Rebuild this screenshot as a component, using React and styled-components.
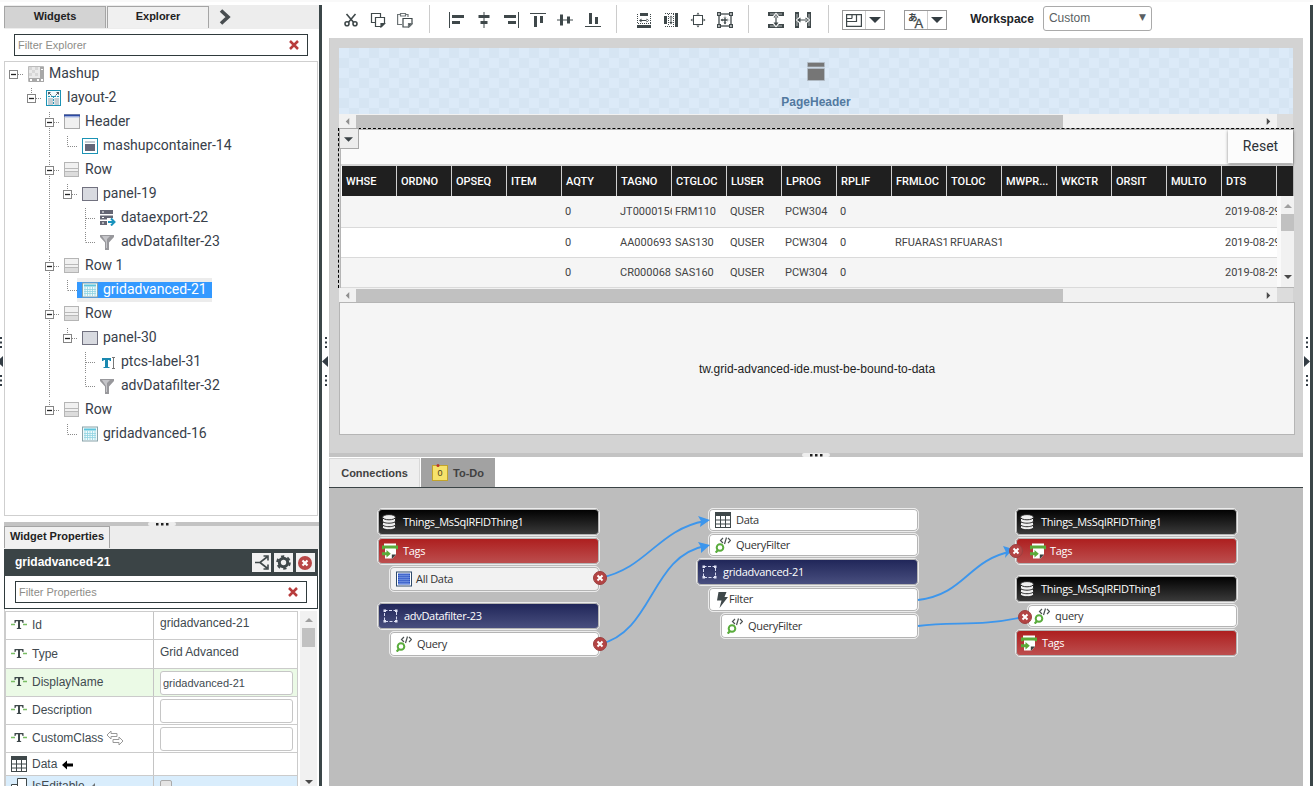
import styled, { createGlobalStyle, css } from "styled-components";

const GlobalStyle = createGlobalStyle`
  * {
    box-sizing: border-box;
  }

  body {
    margin: 0;
    background: #fff;
    color: #333;
    font-family: "Liberation Sans", Arial, sans-serif;
    font-size: 12px;
    overflow: hidden;
  }
`

/* ---------- shell ---------- */

const Shell = styled.div`
  display: flex;
  width: 1313px;
  height: 786px;
  overflow: hidden;
  background: linear-gradient(#f9f9f9 2px, #fff 2px);
`
const Edge = styled.div`
  flex: none;
  width: 3px;
  margin-top: 5px;
  background: #3b4648;
`
const Handle = styled.div`
  flex: none;
  width: ${({ $width }) => $width}px;
  padding-top: 337px;
  overflow: hidden;

  svg {
    display: block;
    margin-left: ${({ $shift }) => $shift || 0}px;
  }
`
const Sidebar = styled.aside`
  display: flex;
  flex-direction: column;
  flex: none;
  width: 315px;
  padding-top: 5px;
`
const Main = styled.main`
  display: flex;
  flex-direction: column;
  flex: none;
  width: 974px;
`

/* ---------- sidebar ---------- */

const TabStrip = styled.div`
  display: flex;
  flex: none;
  gap: 1px;
  height: ${({ $height }) => $height}px;
  padding-top: ${({ $top }) => $top || 0}px;
  background: #ededed;
`
const SideTab = styled.div`
  width: ${({ $width }) => $width}px;
  height: 22px;
  border: 1px solid #a5a5a5;
  border-bottom: none;
  background: ${({ $active }) => ($active ? "#f0f0f0" : "#d3d3d3")};
  color: #222;
  font-size: 11px;
  font-weight: bold;
  line-height: 19px;
  text-align: center;
`
const Chevron = styled.svg`
  margin: 3px 0 0 9px;
`
const FilterBox = styled.div`
  display: flex;
  flex: none;
  align-items: center;
  justify-content: space-between;
  width: ${({ $width }) => $width}px;
  height: 22px;
  margin: ${({ $margin }) => $margin};
  padding: 0 8px 0 3px;
  border: 1px solid #2f3a3c;
  background: #fff;
  color: #8d8d88;
  font-size: 11px;
`
const Tree = styled.div`
  flex: none;
  width: 314px;
  height: 455px;
  border: 1px solid #cfcfcf;
  background: #fff;
`
const TreeRow = styled.div`
  display: flex;
  height: 24px;
`
const TreeItem = styled.div`
  display: flex;
  align-items: center;
  height: 24px;
  padding: 0 5px;
  gap: 5px;
  color: #38404a;
  font-family: Roboto, sans-serif;
  font-size: 14px;
  line-height: 16px;
  white-space: nowrap;

  svg {
    flex: none;
  }

  span {
    margin-top: -2px;
  }

  ${({ $selected }) => $selected && css`
    background: linear-gradient(#ececec 4px, #3399ff 4px, #3399ff 20px, #ececec 20px);
    color: #fff;
  `}
`
const SplitBar = styled.div`
  display: flex;
  flex: none;
  align-items: flex-start;
  justify-content: center;
  height: ${({ $height }) => $height}px;
  margin-top: ${({ $top }) => $top || 0}px;
  background: #c3c3c3;

  span {
    width: 28px;
    height: ${({ $height }) => $height}px;
    border-radius: 2px;
    background: #eee;
  }

  svg {
    display: block;
    margin: 1px auto 0;
  }
`
const WidgetHeader = styled.div`
  display: flex;
  flex: none;
  align-items: center;
  width: 314px;
  height: 27px;
  padding: 0 3px 0 11px;
  gap: 3px;
  background: #3b4446;
  color: #fff;
  font-weight: bold;

  b {
    flex: 1;
    margin-top: -2px;
  }
`
const HeaderButton = styled.div`
  width: 19px;
  height: 19px;
  background: #f1f1f1;

  svg {
    display: block;
  }
`
const FilterArea = styled.div`
  flex: none;
  width: 314px;
  height: 33px;
  padding: 5px 0 0 10px;
  border: 1px solid #2f3a3c;
  border-top: none;
`
const PropArea = styled.div`
  display: flex;
  flex: 1;
  width: 314px;
  padding: 2px 0 0;
  border-left: 1px solid #ccc;
  overflow: hidden;
`
const PropTable = styled.div`
  width: 293px;
  border-left: 1px solid #ccc;
  border-top: 1px solid #ccc;
`
const PropRow = styled.div`
  display: grid;
  grid-template-columns: 148px 144px;
  height: ${({ $height }) => $height}px;
  border-bottom: 1px solid #cbcbcb;
  background: ${({ $bg }) => $bg || "#fff"};
  color: #414a50;
`
const PropName = styled.div`
  display: flex;
  align-items: flex-start;
  padding: ${({ $top }) => $top || 4}px 0 0 5px;
  gap: 5px;
  border-right: 1px solid #c4c4c4;
  line-height: 16px;

  svg {
    flex: none;
  }

  svg + span + svg {
    margin-left: ${({ $near }) => $near || 0}px;
  }
`
const PropValue = styled.div`
  padding: ${({ $top }) => $top || 3}px 0 0 6px;
  border-right: 1px solid #cbcbcb;
  line-height: 16px;
`
const PropInput = styled.div`
  width: 133px;
  height: 24px;
  margin-top: -1px;
  padding-left: 2px;
  border: 1px solid #c6c6c6;
  border-radius: 3px;
  background: #fff;
  font-size: 11px;
  line-height: 23px;
`
const Checkbox = styled.div`
  width: 12px;
  height: 12px;
  margin-top: 1px;
  border: 1px solid #aaa;
  border-radius: 2px;
  background: #e4e4e4;
`
const VScroll = styled.div`
  display: flex;
  flex-direction: column;
  align-items: center;
  justify-content: space-between;
  width: ${({ $width }) => $width}px;
  margin-left: ${({ $left }) => $left}px;
  padding: ${({ $pad }) => $pad};
  background: #f1f1f1;
`
const VThumb = styled.i`
  width: 13px;
  height: ${({ $height }) => $height}px;
  margin: 4px 0 auto;
  background: #c1c1c1;
`

/* ---------- toolbar ---------- */

const Toolbar = styled.div`
  display: flex;
  flex: none;
  height: 38px;
  padding: 5px 0 0 8px;
`
const ToolGroup = styled.div`
  display: grid;
  grid-auto-flow: column;
  grid-auto-columns: ${({ $pitch }) => $pitch || 27}px;
  place-items: center;
  height: 30px;
  margin-right: ${({ $after }) => $after}px;
`
const Separator = styled.i`
  width: 1px;
  height: 28px;
  margin-right: 13px;
  background: #ccc;
`
const DropButton = styled.div`
  display: flex;
  align-items: center;
  width: 43px;
  height: 20px;
  margin: 5px 19px 0 0;
  border: 1px solid #999;

  svg {
    margin-left: 3px;
  }

  i {
    width: 1px;
    height: 18px;
    margin-left: 3px;
    background: #ccc;
  }
`
const ToolLabel = styled.b`
  margin: 7px 9px 0 4px;
  color: #1c2428;
  line-height: 14px;
`
const Select = styled.div`
  display: flex;
  justify-content: space-between;
  align-items: center;
  width: 109px;
  height: 25px;
  margin-top: 1px;
  padding: 0 5px;
  border: 1px solid #aaa;
  border-radius: 3px;
  color: #5a5f62;

  span {
    margin-top: -1px;
  }

  small {
    margin-top: -3px;
    font-family: "DejaVu Sans", sans-serif;
    font-size: 9px;
  }
`

/* ---------- canvas ---------- */

const Canvas = styled.section`
  display: flex;
  flex-direction: column;
  flex: none;
  height: 415px;
  padding: 10px 0 0 9px;
  border-left: 1px solid #ccc;
  background: #d3d3d3;
`
const PageHeader = styled.div`
  display: flex;
  flex-direction: column;
  align-items: center;
  width: 954px;
  height: 66px;
  padding-top: 14px;
  gap: 14px;
  background: repeating-conic-gradient(#d6e5f3 0 25%, #dceaf8 0 50%) 0 0 / 20px 20px;
  color: #5279a0;
  font-weight: bold;
  line-height: 14px;
`
const HScroll = styled.div`
  display: flex;
  align-items: center;
  width: 954px;
  height: 14px;
  background: linear-gradient(90deg, #f1f1f1 938px, #dcdcdc 938px);

  svg {
    margin: 0 5px;
  }

  i {
    width: 707px;
    height: 13px;
    margin-right: 197px;
    background: #c1c1c1;
  }
`
const GridFrame = styled.div`
  position: relative;
  width: 956px;
  height: 160px;
  margin-left: -1px;
  padding-left: 1px;
  border-top: 1px dashed #000;
  border-left: 1px dashed #000;
`
const GridMenu = styled.div`
  position: absolute;
  left: 0;
  top: -1px;
  width: 20px;
  height: 21px;
  padding: 6px 4px;
  border: 1px solid #a8a8a8;
  background: #ededed;

  svg {
    display: block;
  }
`
const GridPanel = styled.div`
  height: 159px;
  border: 1px solid #b5b5b5;
  background: #fafafa;
`
const GridBar = styled.div`
  display: flex;
  justify-content: flex-end;
  height: 36px;
  border-bottom: 2px solid #d5d5d5;
`
const ResetButton = styled.div`
  width: 65px;
  height: 33px;
  background: #fcfcfc;
  box-shadow: 0 1px 3px rgba(0, 0, 0, 0.45);
  color: #2d3238;
  font-family: Roboto, sans-serif;
  font-size: 14px;
  line-height: 32px;
  text-align: center;
`
const GridHead = styled.div`
  display: flex;
  height: 30px;
  margin-left: 1px;
  background: #1f1f1f;
`
const HeadCell = styled.div`
  flex: none;
  width: 55px;
  padding-left: 4px;
  border-right: 1px solid #d0d0d0;
  color: #fff;
  font-family: Roboto, sans-serif;
  font-size: 11px;
  font-weight: 500;
  line-height: 31px;
  overflow: hidden;
`
const GridBody = styled.div`
  display: flex;
  height: 91px;
`
const GridRow = styled.div`
  display: flex;
  width: 936px;
  height: ${({ $height }) => $height}px;
  padding-left: 1px;
  border-bottom: 1px solid #dadada;
  background: ${({ $odd }) => ($odd ? "#f5f5f5" : "#fff")};
  line-height: ${({ $height }) => $height}px;
`
const Cell = styled.div`
  flex: none;
  width: 55px;
  padding-left: 3px;
  color: #434343;
  font-family: Roboto, sans-serif;
  font-size: 11px;
  white-space: nowrap;
  overflow: hidden;
`
const EmptyGrid = styled.div`
  width: 956px;
  height: 133px;
  border: 1px solid #b5b5b5;
  background: #f5f5f5;
  color: #222;
  line-height: 132px;
  text-align: center;
`

/* ---------- connections ---------- */

const LowerTabs = styled.div`
  display: flex;
  flex: none;
  height: 31px;
  padding-top: 1px;
  gap: 1px;
  border-bottom: 1px solid #3b4446;
`
const LowerTab = styled.div`
  display: flex;
  align-items: center;
  justify-content: center;
  width: ${({ $width }) => $width}px;
  gap: 5px;
  border: 1px solid ${({ $active }) => ($active ? "#d8d8d8" : "#a2a2a2")};
  border-bottom: none;
  background: ${({ $active }) => ($active ? "#eee" : "#a2a2a2")};
  color: #414141;
  font-size: 11px;
  font-weight: bold;

  svg {
    margin-top: -2px;
  }
`
const Diagram = styled.div`
  position: relative;
  flex: 1;
  background: #bdbdbd;
  overflow: hidden;
`
const Links = styled.svg`
  position: absolute;
  left: 0;
  top: 0;
`
const nodeFill = {
  thing: "linear-gradient(#000, #3c3c3c)",
  service: "linear-gradient(#ad1d1d, #bd5050)",
  widget: "linear-gradient(#1f2558, #4a5080)",
  pale: "#f2f2f2",
  plain: "#fff",
}
const Node = styled.div`
  position: absolute;
  left: ${({ $x }) => $x}px;
  top: ${({ $y }) => $y}px;
  display: flex;
  align-items: center;
  width: ${({ $w }) => $w}px;
  height: ${({ $h }) => $h}px;
  padding-left: ${({ $pad }) => $pad}px;
  gap: ${({ $gap }) => $gap}px;
  border: 1px solid #ececec;
  border-radius: 5px;
  background: ${({ $kind }) => nodeFill[$kind]};
  box-shadow: inset 0 0 0 1px #b4b4b4;
  color: ${({ $kind }) => ($kind === "plain" || $kind === "pale" ? "#333" : "#fff")};
  font-family: "Open Sans", "Noto Sans", sans-serif;
  font-size: 11px;
  letter-spacing: -0.3px;
  white-space: nowrap;

  span {
    margin-top: -2px;
  }
`

/* ---------- drawings ---------- */

const ink = "#3f484a";

const Dots = () => (
  <svg width="14" height="3" viewBox="0 0 14 3" fill="#222">
    <path d="M1 0h2.500v2.500H1zM6 0h2.500v2.500H6zM11 0h2.500v2.500H11z" />
  </svg>
)

const HandleArt = ({ right }) => (
  <svg width="7" height="50" viewBox="0 0 7 50" fill="#333c44">
    <path d="M3 0h2v2H3zM3 4.500h2v2H3zM3 9h2v2H3zM3 38h2v2H3zM3 42.500h2v2H3zM3 47h2v2H3z" />
    {right ? <path d="M1 19l6 5.500-6 5.500z" /> : <path d="M6 19l-6 5.500 6 5.500z" />}
  </svg>
)

const Arrow = styled.svg`
  flex: none;
`

const Tri = ({ dir, color = "#4a4a4a", w = 8 }) => {
  const shapes = {
    up: "M0 6L4 2l4 4z",
    down: "M0 2h8L4 6z",
    left: "M6 0v8L2 4z",
    right: "M2 0v8l4-4z",
  }
  return (
    <Arrow width={w} height={w} viewBox="0 0 8 8" fill={color}>
      <path d={shapes[dir]} />
    </Arrow>
  )
}

const RedX = () => (
  <svg width="10" height="10" viewBox="0 0 10 10" stroke="#b83c3c" strokeWidth="2.500">
    <path d="M1 1l8 8M9 1L1 9" />
  </svg>
)

// one 18px cell of the tree's dotted guides
const Guide = ({ kind }) => {
  const box = kind === "root" || kind === "box" || kind === "boxMid"
  const up = kind !== "root" && kind !== "blank"
  const down = kind === "line" || kind === "mid" || kind === "boxMid"
  return (
    <svg width="18" height="24" viewBox="0 0 18 24" fill="none">
      <g stroke="#8a8a8a" strokeDasharray="1 1">
        {up && <path d="M8.500 2V12.500" />}
        {kind === "line" && <path d="M8.500 0V3" />}
        {down && <path d="M8.500 12V24" />}
        {kind !== "line" && kind !== "blank" && <path d="M9 12.500H18" />}
      </g>
      {box && (
        <>
          <rect x="4.500" y="8.500" width="8" height="8" fill="#fff" stroke="#858585" />
          <path d="M6 12.500h5" stroke="#222" strokeWidth="1.300" />
        </>
      )}
    </svg>
  )
}

const treeIcons = {
  mashup: (
    <>
      <path d="M.5.5h15v15H.5z" fill="#e9e9e9" stroke="#bbb" />
      <path d="M1 1h3v3H1zM7 1h3v3H7zM4 4h3v3H4zM1 7h3v3H1zM7 7h3v3H7z" fill="#d6d6d6" />
      <path d="M12 1h4v15H1v-4h11z" fill="#a8a8a8" />
      <path d="M13 3h2v1h-2zM13 13h2v2h-2zM2 13h2v2H2zM9 13h2v2H9z" fill="#fff" />
    </>
  ),
  layout: (
    <>
      <rect x=".5" y=".5" width="14" height="15" fill="#f2fbfd" stroke="#1c93b5" />
      <path d="M2 8h5v7H2zM8.500 8H13v7H8.500z" fill="#c3ccd2" />
      <path d="M2 2h3L2 5zM13 2h-3l3 3z" fill="#555c66" />
      <path d="M3 3l2.500 2.500M12 3L9.500 5.500" stroke="#555c66" />
      <path d="M2 6.500h11M7.500 6v9" stroke="#2795b5" strokeDasharray="2 1" />
    </>
  ),
  header: (
    <>
      <rect x=".5" y=".5" width="15" height="14" fill="#f0f0f0" stroke="#aaa" />
      <path d="M0 .5h16v2H0z" fill="#2c4aa5" />
      <path d="M1 2.500h14v1H1z" fill="#a9bbea" />
    </>
  ),
  container: (
    <>
      <rect x=".5" y=".5" width="15" height="15" fill="#fff" stroke="#1c93b5" />
      <path d="M3 3h10v2H3z" fill="#c8ced4" />
      <path d="M3 6h10v7H3z" fill="#666778" />
    </>
  ),
  row: (
    <>
      <rect x=".5" y=".5" width="14" height="14" fill="#f1f1f1" stroke="#b5b5b5" />
      <path d="M1 10h13v4H1z" fill="#dcdcdc" />
      <path d="M1 6.500h13M1 9.500h13" stroke="#b9b9b9" />
    </>
  ),
  panel: <rect x=".5" y="1.500" width="15" height="13" fill="#d8dae0" stroke="#71717f" />,
  dataexport: (
    <>
      <path d="M0 0h13v4H0zM0 5.500h13v4H0zM0 11h7v4H0z" fill="#656674" />
      <path d="M2 2h2M2 7.500h2M2 13h2" stroke="#fff" />
      <path d="M7 8h9v8H7z" fill="#fff" />
      <path d="M8 12h6.500M11 8.500l3.500 3.500-3.500 3.500" fill="none" stroke="#1a93bd" strokeWidth="2" />
    </>
  ),
  funnel: (
    <>
      <path d="M0 1h14v2L9 8.500V16H5V8.500L0 3z" fill="#98989c" />
      <path d="M2 2h8L7 5v9H6V8z" fill="#c5c5c9" />
    </>
  ),
  grid: (
    <>
      <rect x=".5" y="1" width="15" height="14" fill="#effafb" stroke="#8aa3aa" />
      <path d="M2 2.500h12v2H2z" fill="#5cc4dc" />
      <path d="M3 5v9M5.500 5v9M8 5v9M10.500 5v9M13 5v9M2 7.500h12M2 9.500h12M2 11.500h12" stroke="#8fd3e2" strokeWidth=".8" />
    </>
  ),
  label: (
    <>
      <path d="M2 4h9v3H9.500V6H8v7h1.500v1h-6v-1H5V6H3.500v1H2z" fill="#1a88b0" />
      <path d="M12 3.500h3M13.500 3.500v11M12 14.500h3" stroke="#777" fill="none" />
    </>
  ),
}

const TreeIcon = ({ name }) => (
  <svg width="16" height="16" viewBox="0 0 16 16">{treeIcons[name]}</svg>
)

const tools = {
  cut: (
    <g fill="none" stroke={ink} strokeWidth="1.600">
      <circle cx="4" cy="11.800" r="2" />
      <circle cx="12" cy="11.800" r="2" />
      <path d="M5.500 10.300L12.500 2M10.500 10.300L3.500 2" />
    </g>
  ),
  copy: (
    <g fill="none" stroke={ink} strokeWidth="1.200">
      <path d="M5 10.500H1.500v-9h9V5" />
      <path d="M5.500 5.500h9v6l-3 3h-6z" />
      <path d="M11 15v-3.500h3.500z" fill={ink} />
    </g>
  ),
  paste: (
    <g fill="none" stroke="#6d7476" strokeWidth="1.200">
      <path d="M5 12.500H.6v-10H3M9 2.500h2V5" />
      <path d="M3.500 1.500h5v2.500h-5z" />
      <path d="M6 6.500h9v5.500l-3 3H6z" stroke={ink} />
      <path d="M11.500 15v-3.500H15z" fill={ink} />
    </g>
  ),
  left: <path d="M0 0h1v16H0zM3 3h12v3H3zM3 9h8v3H3z" />,
  center: <path d="M7.500 0h1v16h-1zM2.500 3h11v3h-11zM4.500 9h7v3h-7z" />,
  right: <path d="M15 0h1v16h-1zM1 3h12v3H1zM5 9h8v3H5z" />,
  top: <path d="M0 1h16v1H0zM4 4h3v11H4zM10 4h3v7h-3z" />,
  middle: <path d="M0 7.500h16v1H0zM3 2.500h3v11H3zM10 4.500h3v7h-3z" />,
  bottom: <path d="M0 14h16v1H0zM4 1h3v11H4zM10 5h3v7h-3z" />,
  distH: (
    <>
      <path d="M4 1h8v3H4zM1 13h14v3H1zM4 8h8v1H4zM5.500 6.500v4L3 8.500zM10.500 6.500v4l2.500-2z" />
      <path d="M1.500 2v10M14.500 2v10M2 11.500h13" fill="none" stroke={ink} strokeDasharray="1 1" />
    </>
  ),
  distV: (
    <>
      <path d="M1 4h3v8H1zM12 1h3v14h-3zM7.500 5h1v6h-1zM6.300 6h3.400L8 3.500zM6.300 10h3.400L8 12.500z" />
      <path d="M2 1.500h10M2 14.500h10M5.500 2v12M10.500 2v12" fill="none" stroke={ink} strokeDasharray="1 1" />
    </>
  ),
  center1: (
    <>
      <rect x="3.500" y="3.500" width="9" height="9" fill="none" stroke={ink} />
      <path d="M6.500 2.500h3L8 .5zM6.500 13.500h3L8 15.500zM2.500 6.500v3L.5 8zM13.500 6.500v3L15.500 8z" />
    </>
  ),
  fit: (
    <>
      <rect x="2" y="2" width="12" height="12" fill="none" stroke={ink} strokeWidth="1.300" />
      <path d="M0 0h4v4H0zM12 0h4v4h-4zM0 12h4v4H0zM12 12h4v4h-4z" />
      <path d="M1.200 1.200h1.500v1.500H1.200zM13.200 1.200h1.500v1.500h-1.500zM1.200 13.200h1.500v1.500H1.200zM13.200 13.200h1.500v1.500h-1.500z" fill="#fff" />
      <path d="M7.300 4h1.400v8H7.300zM4 7.300h8v1.400H4zM6.500 5.500h3L8 3.500zM6.500 10.500h3L8 12.500zM5.500 6.500v3l-2-1.500zM10.500 6.500v3l2-1.500z" />
    </>
  ),
  sameH: (
    <>
      <path d="M0 0h16v4H0zM0 12h16v4H0z" />
      <path d="M2 1.200h12v1.600H2zM2 13.200h12v1.600H2z" fill="#8d9394" />
      <path d="M5 4l3-3.500L11 4zM5 12l3 3.500 3-3.500z" fill="#fff" />
      <path d="M7.400 3.500h1.200v9H7.400zM5.500 5.500h5L8 2zM5.500 10.500h5L8 14z" />
    </>
  ),
  sameW: (
    <>
      <path d="M0 0h4v16H0zM12 0h4v16h-4z" />
      <path d="M1.200 2h1.600v12H1.200zM13.200 2h1.600v12h-1.600z" fill="#8d9394" />
      <path d="M4 5L.8 8 4 11zM12 5l3.200 3-3.200 3z" fill="#fff" />
      <path d="M3.500 7.400h9v1.200h-9zM5.500 5.500v5L2 8zM10.500 5.500v5L14 8z" />
    </>
  ),
}

const Tool = ({ name }) => (
  <svg width="16" height="16" viewBox="0 0 16 16" fill={ink}>{tools[name]}</svg>
)

const TextProp = () => (
  <svg width="16" height="16" viewBox="0 0 16 16">
    <path d="M0 7.500h4M12 7.500h4" stroke="#79bd64" strokeWidth="1.300" />
    <path d="M3.500 3h9v3h-1L11 4.200H9v6.500l1.200.5v.8H5.800v-.8l1.200-.5V4.200H5L4.500 6h-1z" fill="#3d4749" />
  </svg>
)

const TableIcon = () => (
  <svg width="16" height="16" viewBox="0 0 16 16">
    <rect x=".5" y=".5" width="15" height="15" fill="#fff" stroke={ink} />
    <path d="M0 0h16v4H0z" fill={ink} />
    <path d="M0 8h16M0 12h16M5.500 4v12M10.500 4v12" stroke={ink} />
  </svg>
)

const nodeIcons = {
  db: (
    <g fill="#efefef" stroke="#151515" strokeWidth=".9">
      <path d="M.5 11.500v2c0 1.200 3 2.200 6.500 2.200s6.500-1 6.500-2.200v-2z" />
      <path d="M.5 8v2.500c0 1.200 3 2.200 6.500 2.200s6.500-1 6.500-2.200V8z" />
      <path d="M.5 4.500V7c0 1.200 3 2.200 6.500 2.200S13.500 8.200 13.500 7V4.500z" />
      <ellipse cx="7" cy="3.200" rx="6.500" ry="2.600" />
    </g>
  ),
  tags: (
    <>
      <path d="M2 .5h12v4H2zM3 5h11v6.500l-3.500 4H3z" fill="#fff" />
      <path d="M9.800 16v-4.500H14z" fill="#39403f" />
      <path d="M0 2.500h16v3.800h-2.200V5.500H2.200v.8H0z" fill="#5aab3a" />
      <path d="M0 9.200h4.500V7l4.300 3.800-4.300 3.700v-2.200H0z" fill="#5aab3a" />
    </>
  ),
  allData: (
    <>
      <rect x=".5" y="1" width="15" height="14" fill="#fff" stroke="#2e4a6b" />
      <path d="M2 2.500h12v11H2z" fill="#2a52c4" />
      <path d="M2 4.500h12M2 6.500h12M2 8.500h12M2 10.500h12M2 12.500h12M4 3v11M6 3v11M8 3v11M10 3v11M12 3v11" stroke="#7f9fe6" strokeWidth=".6" />
    </>
  ),
  widget: (
    <>
      <rect x="1.500" y="2.500" width="12" height="11" fill="none" stroke="#d7daf2" strokeDasharray="3 1.500" />
      <path d="M.5 1.500H3V4H.5zM12 1.500h2.500V4H12zM.5 12H3v2.500H.5zM12 12h2.500v2.500H12z" fill="#e2e4f6" />
    </>
  ),
  query: (
    <>
      <circle cx="5" cy="10.500" r="3.300" fill="none" stroke="#59ac3c" strokeWidth="2" />
      <path d="M3 13L.7 15.600" stroke="#59ac3c" strokeWidth="2.200" />
      <path d="M8 1L5.500 3.500 8 6M13 1l2.500 2.500L13 6M11.500.5L9.500 7" fill="none" stroke="#4b5152" strokeWidth="1.200" />
    </>
  ),
  bolt: <path d="M2.500 0h8L8.500 5H12L3.500 16l2-7.500H1z" fill={ink} />,
}
const iconWidths = { bolt: 12, db: 15, widget: 15 }

const NodeIcon = ({ name }) => {
  const w = iconWidths[name] || 16
  if (name === "table") return <TableIcon />
  return (
    <svg width={w} height="16" viewBox={`0 0 ${w} 16`}>{nodeIcons[name]}</svg>
  )
}

/* ---------- data ---------- */

const tree = [
  { guides: ["root"], icon: "mashup", label: "Mashup" },
  { guides: ["blank", "box"], icon: "layout", label: "layout-2" },
  { guides: ["blank", "blank", "boxMid"], icon: "header", label: "Header" },
  { guides: ["blank", "blank", "line", "end"], icon: "container", label: "mashupcontainer-14" },
  { guides: ["blank", "blank", "boxMid"], icon: "row", label: "Row" },
  { guides: ["blank", "blank", "line", "box"], icon: "panel", label: "panel-19" },
  { guides: ["blank", "blank", "line", "blank", "mid"], icon: "dataexport", label: "dataexport-22" },
  { guides: ["blank", "blank", "line", "blank", "end"], icon: "funnel", label: "advDatafilter-23" },
  { guides: ["blank", "blank", "boxMid"], icon: "row", label: "Row 1" },
  { guides: ["blank", "blank", "line", "end"], icon: "grid", label: "gridadvanced-21", selected: true },
  { guides: ["blank", "blank", "boxMid"], icon: "row", label: "Row" },
  { guides: ["blank", "blank", "line", "box"], icon: "panel", label: "panel-30" },
  { guides: ["blank", "blank", "line", "blank", "mid"], icon: "label", label: "ptcs-label-31" },
  { guides: ["blank", "blank", "line", "blank", "end"], icon: "funnel", label: "advDatafilter-32" },
  { guides: ["blank", "blank", "box"], icon: "row", label: "Row" },
  { guides: ["blank", "blank", "blank", "end"], icon: "grid", label: "gridadvanced-16" },
]

const columns = ["WHSE", "ORDNO", "OPSEQ", "ITEM", "AQTY", "TAGNO", "CTGLOC", "LUSER", "LPROG",
  "RPLIF", "FRMLOC", "TOLOC", "MWPR...", "WKCTR", "ORSIT", "MULTO", "DTS"]

const rows = [
  { AQTY: "0", TAGNO: "JT0000156", CTGLOC: "FRM110", LUSER: "QUSER", LPROG: "PCW304", RPLIF: "0", DTS: "2019-08-29" },
  { AQTY: "0", TAGNO: "AA000693", CTGLOC: "SAS130", LUSER: "QUSER", LPROG: "PCW304", RPLIF: "0",
    FRMLOC: "RFUARAS1", TOLOC: "RFUARAS1", DTS: "2019-08-29" },
  { AQTY: "0", TAGNO: "CR000068", CTGLOC: "SAS160", LUSER: "QUSER", LPROG: "PCW304", RPLIF: "0", DTS: "2019-08-29" },
]
const rowHeights = [32, 30, 30]

// positions are relative to the diagram area
const nodes = [
  { x: 48, y: 20, w: 223, h: 28, kind: "thing", icon: "db", pad: 4, gap: 6, text: "Things_MsSqlRFIDThing1" },
  { x: 48, y: 49, w: 223, h: 28, kind: "service", icon: "tags", pad: 4, gap: 5, text: "Tags" },
  { x: 60, y: 78, w: 211, h: 26, kind: "pale", icon: "allData", pad: 6, gap: 4, text: "All Data" },
  { x: 48, y: 114, w: 223, h: 28, kind: "widget", icon: "widget", pad: 5, gap: 6, text: "advDatafilter-23" },
  { x: 60, y: 143, w: 211, h: 26, kind: "plain", icon: "query", pad: 6, gap: 5, text: "Query" },
  { x: 379, y: 20, w: 211, h: 24, kind: "plain", icon: "table", pad: 6, gap: 5, text: "Data" },
  { x: 379, y: 45, w: 211, h: 24, kind: "plain", icon: "query", pad: 6, gap: 5, text: "QueryFilter" },
  { x: 367, y: 70, w: 223, h: 28, kind: "widget", icon: "widget", pad: 5, gap: 6, text: "gridadvanced-21" },
  { x: 379, y: 99, w: 211, h: 25, kind: "plain", icon: "bolt", pad: 7, gap: 1, text: "Filter" },
  { x: 391, y: 125, w: 199, h: 26, kind: "plain", icon: "query", pad: 6, gap: 5, text: "QueryFilter" },
  { x: 686, y: 20, w: 223, h: 28, kind: "thing", icon: "db", pad: 4, gap: 6, text: "Things_MsSqlRFIDThing1" },
  { x: 686, y: 49, w: 223, h: 28, kind: "service", icon: "tags", pad: 14, gap: 4, text: "Tags" },
  { x: 686, y: 87, w: 223, h: 28, kind: "thing", icon: "db", pad: 4, gap: 6, text: "Things_MsSqlRFIDThing1" },
  { x: 698, y: 116, w: 211, h: 24, kind: "plain", icon: "query", pad: 6, gap: 5, text: "query" },
  { x: 686, y: 141, w: 223, h: 28, kind: "service", icon: "tags", pad: 5, gap: 5, text: "Tags" },
]

const removers = [[271, 90], [271, 156], [687, 63], [696, 129]]

/* ---------- parts ---------- */

function Explorer() {
  return (
    <>
      <TabStrip $height={24} $top={1}>
        <SideTab $width={102}>Widgets</SideTab>
        <SideTab $width={102} $active>Explorer</SideTab>
        <Chevron width="12" height="16" viewBox="0 0 12 16">
          <path d="M2 1.500l7 6.500-7 6.500" fill="none" stroke="#484d50" strokeWidth="3.600" />
        </Chevron>
      </TabStrip>
      <FilterBox $width={294} $margin="5px 0 5px 10px">
        Filter Explorer
        <RedX />
      </FilterBox>
      <Tree>
        {tree.map((item, i) =>
          <TreeRow key={i}>
            {item.guides.map((kind, j) => <Guide key={j} kind={kind} />)}
            <TreeItem $selected={item.selected}>
              <TreeIcon name={item.icon} />
              <span>{item.label}</span>
            </TreeItem>
          </TreeRow>
        )}
      </Tree>
    </>
  );
}

function Properties() {
  return (
    <>
      <SplitBar $height={4} $top={6}><span><Dots /></span></SplitBar>
      <TabStrip $height={23}>
        <SideTab $width={106} $active>Widget Properties</SideTab>
      </TabStrip>
      <WidgetHeader>
        <b>gridadvanced-21</b>
        <HeaderButton>
          <svg width="19" height="19" viewBox="0 0 19 19" fill="none" stroke={ink} strokeWidth="1.600">
            <path d="M3 9.500h5L15 4M8 9.500l7 5.500M11.500 3H16v4.500M16 11.500V16h-4.500" />
          </svg>
        </HeaderButton>
        <HeaderButton>
          <svg width="19" height="19" viewBox="0 0 19 19" fill="none" stroke={ink}>
            <circle cx="9.500" cy="9.500" r="4.200" strokeWidth="3" />
            <circle cx="9.500" cy="9.500" r="6.300" strokeWidth="2" strokeDasharray="3.300 3.300" />
          </svg>
        </HeaderButton>
        <HeaderButton>
          <svg width="19" height="19" viewBox="0 0 19 19">
            <circle cx="9" cy="10" r="7" fill="#b94747" />
            <path d="M6.500 7.500l5 5M11.500 7.500l-5 5" stroke="#fff" strokeWidth="2.200" />
          </svg>
        </HeaderButton>
      </WidgetHeader>
      <FilterArea>
        <FilterBox $width={292} $margin="0">
          Filter Properties
          <RedX />
        </FilterBox>
      </FilterArea>
      <PropArea>
        <PropTable>
          <PropRow $height={28}>
            <PropName $top={5}><TextProp /><span>Id</span></PropName>
            <PropValue>gridadvanced-21</PropValue>
          </PropRow>
          <PropRow $height={29}>
            <PropName $top={6}><TextProp /><span>Type</span></PropName>
            <PropValue $top={4}>Grid Advanced</PropValue>
          </PropRow>
          <PropRow $height={28} $bg="#ebfae6">
            <PropName $top={5}><TextProp /><span>DisplayName</span></PropName>
            <PropValue><PropInput>gridadvanced-21</PropInput></PropValue>
          </PropRow>
          <PropRow $height={28}>
            <PropName $top={5}><TextProp /><span>Description</span></PropName>
            <PropValue><PropInput /></PropValue>
          </PropRow>
          <PropRow $height={28}>
            <PropName $top={5} $near={-2}>
              <TextProp /><span>CustomClass</span>
              <svg width="18" height="16" viewBox="0 0 18 16" fill="#fff" stroke="#999">
                <path d="M5 1L1 5l4 4V6.500h6v-3H5z" />
                <path d="M13 7l4 4-4 4v-2.500H7v-3h6z" />
              </svg>
            </PropName>
            <PropValue><PropInput /></PropValue>
          </PropRow>
          <PropRow $height={23}>
            <PropName $top={3}>
              <TableIcon /><span>Data</span>
              <svg width="12" height="16" viewBox="0 0 12 16" fill="#000">
                <path d="M0 9l5-4.500V7.500h6v3H5v3z" />
              </svg>
            </PropName>
            <PropValue />
          </PropRow>
          <PropRow $height={28} $bg="#d9edfc">
            <PropName $top={2}>
              <svg width="16" height="16" viewBox="0 0 16 16" fill="#fff" stroke={ink}>
                <path d="M6.500.5h9v9h-9zM.5 6.500h6v3h3v6h-9z" />
              </svg>
              <span>IsEditable</span>
              <svg width="12" height="16" viewBox="0 0 12 16" fill="#6b7074">
                <path d="M1 9l4-4v3h2v2H5v3z" />
              </svg>
            </PropName>
            <PropValue><Checkbox /></PropValue>
          </PropRow>
        </PropTable>
        <VScroll $width={17} $left={2} $pad="5px 0 0">
          <Tri dir="up" color="#a0a0a0" />
          <VThumb $height={19} />
          <Tri dir="down" />
        </VScroll>
      </PropArea>
    </>
  );
}

function TopTools() {
  return (
    <Toolbar>
      <ToolGroup $after={11}>
        {["cut", "copy", "paste"].map(name => <Tool key={name} name={name} />)}
      </ToolGroup>
      <Separator />
      <ToolGroup $after={10} $pitch={27.2}>
        {["left", "center", "right", "top", "middle", "bottom"].map(name => <Tool key={name} name={name} />)}
      </ToolGroup>
      <Separator />
      <ToolGroup $after={10}>
        {["distH", "distV", "center1", "fit"].map(name => <Tool key={name} name={name} />)}
      </ToolGroup>
      <Separator />
      <ToolGroup $after={12}>
        {["sameH", "sameW"].map(name => <Tool key={name} name={name} />)}
      </ToolGroup>
      <Separator />
      <DropButton>
        <svg width="16" height="14" viewBox="0 0 16 14" fill="none" stroke={ink} strokeWidth="1.200">
          <path d="M.6 1.600h14.800v11.800H.6zM.6 8.500h9.900V1.600M6 1.600v4M6 5.500H.6" />
        </svg>
        <i />
        <Tri dir="down" color="#343d42" w={12} />
      </DropButton>
      <DropButton>
        <svg width="16" height="18" viewBox="0 0 16 18" fill={ink} overflow="visible">
          <text x="0" y="10" fontSize="9.500" fontWeight="bold" fontFamily="Noto Sans CJK JP, sans-serif">あ</text>
          <text x="6.500" y="16.500" fontSize="13" fontFamily="Liberation Sans, sans-serif" stroke={ink} strokeWidth=".3">A</text>
        </svg>
        <i />
        <Tri dir="down" color="#343d42" w={12} />
      </DropButton>
      <ToolLabel>Workspace</ToolLabel>
      <Select><span>Custom</span><small>▼</small></Select>
    </Toolbar>
  );
}

function MashupCanvas() {
  const scroll = (
    <>
      <Tri dir="left" color="#8f8f8f" w={7} />
      <i />
      <Tri dir="right" w={7} />
    </>
  )
  return (
    <Canvas>
      <PageHeader>
        <svg width="18" height="19" viewBox="0 0 18 19" fill="#767676" stroke="#b3bcc6" strokeWidth=".8">
          <path d="M.5.5h17v4.500H.5zM.5 6.500h17v12H.5z" />
        </svg>
        PageHeader
      </PageHeader>
      <HScroll>{scroll}</HScroll>
      <GridFrame>
        <GridPanel>
          <GridBar><ResetButton>Reset</ResetButton></GridBar>
          <GridHead>
            {columns.map(name => <HeadCell key={name}>{name}</HeadCell>)}
          </GridHead>
          <GridBody>
            <div>
              {rows.map((row, i) =>
                <GridRow key={i} $odd={i % 2 === 0} $height={rowHeights[i]}>
                  {columns.map(name => <Cell key={name}>{row[name]}</Cell>)}
                </GridRow>
              )}
            </div>
            <VScroll $width={13} $left={4} $pad="6px 0 6px">
              <Tri dir="up" color="#a0a0a0" />
              <VThumb $height={17} />
              <Tri dir="down" />
            </VScroll>
          </GridBody>
        </GridPanel>
        <GridMenu><Tri dir="down" color="#3a4145" w={9} /></GridMenu>
      </GridFrame>
      <HScroll>{scroll}</HScroll>
      <EmptyGrid>tw.grid-advanced-ide.must-be-bound-to-data</EmptyGrid>
    </Canvas>
  );
}

function Connections() {
  return (
    <>
      <LowerTabs>
        <LowerTab $width={91} $active>Connections</LowerTab>
        <LowerTab $width={74}>
          <svg width="16" height="17" viewBox="0 0 16 17">
            <rect x=".5" y="1.500" width="15" height="15" fill="#f6e26b" stroke="#c2a32c" />
            <circle cx="6" cy="1.500" r="1.500" fill="#b8372c" />
            <text x="5.500" y="12" fontSize="9" fontWeight="normal" fill="#4d4420" fontFamily="Liberation Sans, sans-serif">0</text>
          </svg>
          To-Do
        </LowerTab>
      </LowerTabs>
      <Diagram>
        {nodes.map((n, i) =>
          <Node key={i} $x={n.x} $y={n.y} $w={n.w} $h={n.h} $kind={n.kind} $pad={n.pad} $gap={n.gap}>
            <NodeIcon name={n.icon} />
            <span>{n.text}</span>
          </Node>
        )}
        <Links width="974" height="298" viewBox="0 0 974 298">
          <g fill="none" stroke="#3d96ec" strokeWidth="1.800">
            <path d="M271 90C319 80 328 42 376 33" />
            <path d="M271 156C324 144 322 68 376 58" />
            <path d="M589 112C637 106 638 72 684 63" />
            <path d="M589 138C625 133 650 139 694 129" />
          </g>
          <g fill="#3d96ec">
            <path d="M381 32l-12-4 3 5-1 6z" />
            <path d="M381 57l-12-3 3 5 0 6z" />
            <path d="M684 61l-10-3 3 6-1 6z" />
          </g>
          {removers.map(([x, y]) =>
            <g key={`${x}-${y}`} transform={`translate(${x} ${y})`}>
              <circle r="6.500" fill="#b34444" stroke="#9c4040" />
              <path d="M-2.500-2.500l5 5M2.500-2.500l-5 5" stroke="#fff" strokeWidth="2" />
            </g>
          )}
        </Links>
      </Diagram>
    </>
  );
}

function App() {
  return (
    <>
      <GlobalStyle />
      <Shell>
        <Handle $width={4} $shift={-3}><HandleArt /></Handle>
        <Sidebar>
          <Explorer />
          <Properties />
        </Sidebar>
        <Edge />
        <Handle $width={7}><HandleArt /></Handle>
        <Main>
          <TopTools />
          <MashupCanvas />
          <SplitBar $height={4}><span><Dots /></span></SplitBar>
          <Connections />
        </Main>
        <Handle $width={7}><HandleArt right /></Handle>
        <Edge />
      </Shell>
    </>
  );
}

export default App;
